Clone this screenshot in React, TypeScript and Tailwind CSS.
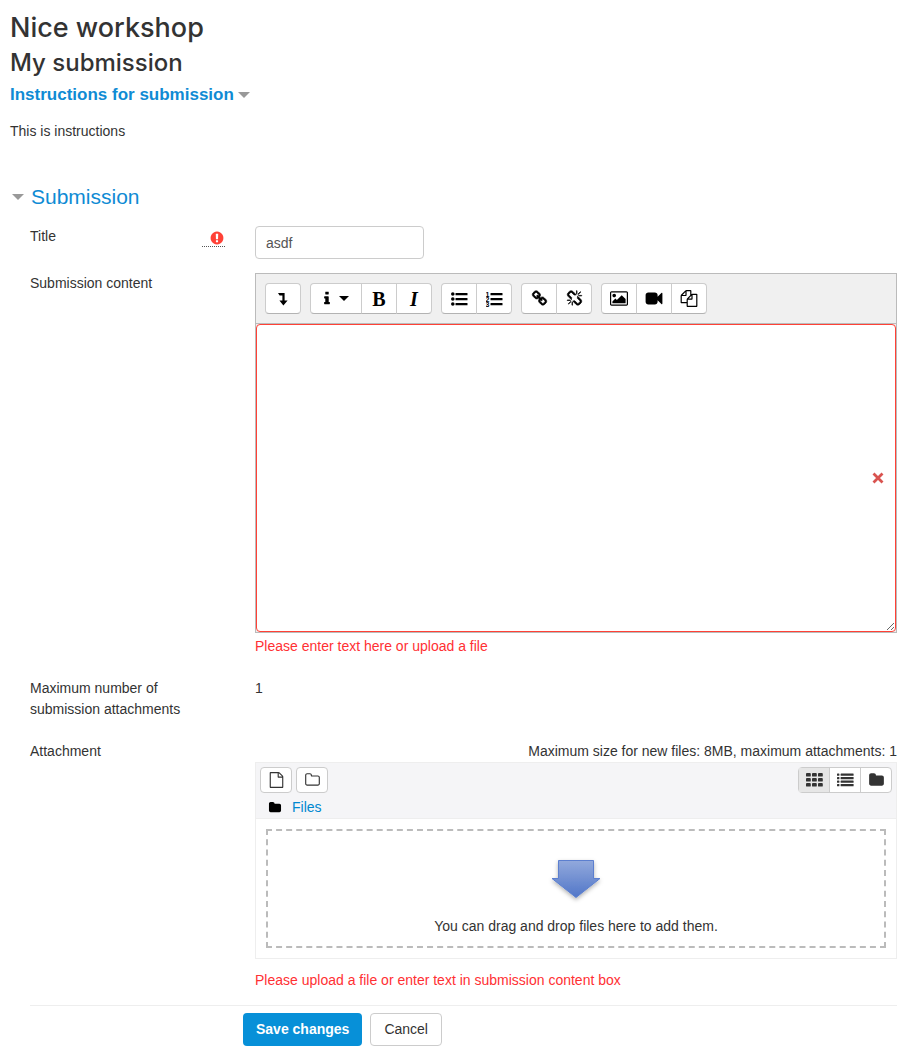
import type { ReactNode } from 'react';

const paths: Record<string, string> = {
  info: 'M1216 1344v128q0 26-19 45t-45 19h-512q-26 0-45-19t-19-45v-128q0-26 19-45t45-19h64v-384h-64q-26 0-45-19t-19-45v-128q0-26 19-45t45-19h384q26 0 45 19t19 45v576h64q26 0 45 19t19 45zm-128-1152v192q0 26-19 45t-45 19h-256q-26 0-45-19t-19-45v-192q0-26 19-45t45-19h256q26 0 45 19t19 45z',
  link: 'M1520 1216q0-40-28-68l-208-208q-28-28-68-28-42 0-72 32 3 3 19 18.5t21.5 21.5 15 19 13 25.5 3.5 27.5q0 40-28 68t-68 28q-15 0-27.5-3.5t-25.5-13-19-15-21.5-21.5-18.5-19q-33 31-33 73 0 40 28 68l206 207q27 27 68 27 40 0 68-26l147-146q28-28 28-67zm-703-705q0-40-28-68l-206-207q-28-28-68-28-39 0-68 27l-147 146q-28 28-28 67 0 40 28 68l208 208q27 27 68 27 42 0 72-31-3-3-19-18.5t-21.5-21.5-15-19-13-25.5-3.5-27.5q0-40 28-68t68-28q15 0 27.5 3.5t25.5 13 19 15 21.5 21.5 18.5 19q33-31 33-73zm895 705q0 120-85 203l-147 146q-83 83-203 83-121 0-204-85l-206-207q-83-83-83-203 0-123 88-209l-88-88q-86 88-208 88-120 0-204-84l-208-208q-84-84-84-204t85-203l147-146q83-83 203-83 121 0 204 85l206 207q83 83 83 203 0 123-88 209l88 88q86-88 208-88 120 0 204 84l208 208q84 84 84 204z',
  unlink:
    'M503 1271l-256 256q-10 9-23 9-12 0-23-9-9-10-9-23t9-23l256-256q10-9 23-9t23 9q9 10 9 23t-9 23zm169 41v320q0 14-9 23t-23 9-23-9-9-23v-320q0-14 9-23t23-9 23 9 9 23zm-224-224q0 14-9 23t-23 9h-320q-14 0-23-9t-9-23 9-23 23-9h320q14 0 23 9t9 23zm1264 128q0 120-85 203l-147 146q-83 83-203 83-121 0-204-85l-334-335q-21-21-42-56l239-18 273 274q28 28 68 27.5t68-27.5l147-146q28-28 28-67 0-40-28-68l-274-275 18-239q35 21 56 42l336 336q84 86 84 204zm-617-724l-239 18-273-274q-28-28-68-28-39 0-68 27l-147 146q-28 28-28 67 0 40 28 68l274 274-18 240q-35-21-56-42l-336-336q-84-86-84-204 0-120 85-203l147-146q83-83 203-83 121 0 204 85l334 335q21 21 42 56zm633 84q0 14-9 23t-23 9h-320q-14 0-23-9t-9-23 9-23 23-9h320q14 0 23 9t9 23zm-544-544v320q0 14-9 23t-23 9-23-9-9-23v-320q0-14 9-23t23-9 23 9 9 23zm407 151l-256 256q-11 9-23 9t-23-9q-9-10-9-23t9-23l256-256q10-9 23-9t23 9q9 10 9 23t-9 23z',
  image:
    'M576 576q0 80-56 136t-136 56-136-56-56-136 56-136 136-56 136 56 56 136zm1024 384v448h-1408v-192l320-320 160 160 512-512zm96-704h-1600q-13 0-22.5 9.5t-9.5 22.5v1216q0 13 9.5 22.5t22.5 9.5h1600q13 0 22.5-9.5t9.5-22.5v-1216q0-13-9.5-22.5t-22.5-9.5zm160 32v1216q0 66-47 113t-113 47h-1600q-66 0-113-47t-47-113v-1216q0-66 47-113t113-47h1600q66 0 113 47t47 113z',
  video:
    'M1792 352v1088q0 42-39 59-13 5-25 5-27 0-45-19l-403-403v166q0 119-84.5 203.5t-203.5 84.5h-704q-119 0-203.5-84.5t-84.5-203.5v-704q0-119 84.5-203.5t203.5-84.5h704q119 0 203.5 84.5t84.5 203.5v165l403-402q18-19 45-19 12 0 25 5 39 17 39 59z',
  files:
    'M1696 384q40 0 68 28t28 68v1216q0 40-28 68t-68 28h-960q-40 0-68-28t-28-68v-288h-544q-40 0-68-28t-28-68v-672q0-40 20-88t48-76l408-408q28-28 76-48t88-20h416q40 0 68 28t28 68v328q68-40 128-40h416zm-544 213l-299 299h299v-299zm-640-384l-299 299h299v-299zm196 647l316-316v-416h-384v416q0 40-28 68t-68 28h-416v640h512v-256q0-40 20-88t48-76zm956 804v-1152h-384v416q0 40-28 68t-68 28h-416v640h896z',
  file: 'M1596 380q28 28 48 76t20 88v1152q0 40-28 68t-68 28h-1344q-40 0-68-28t-28-68v-1600q0-40 28-68t68-28h896q40 0 88 20t76 48zm-444-244v376h376q-10-29-22-41l-313-313q-12-12-41-22zm384 1528v-1024h-416q-40 0-68-28t-28-68v-416h-768v1536h1280z',
  folder:
    'M1728 608v704q0 92-66 158t-158 66h-1216q-92 0-158-66t-66-158v-960q0-92 66-158t158-66h320q92 0 158 66t66 158v32h672q92 0 158 66t66 158z',
  folderOpen:
    'M1600 1312v-704q0-40-28-68t-68-28h-704q-40 0-68-28t-28-68v-64q0-40-28-68t-68-28h-320q-40 0-68 28t-28 68v960q0 40 28 68t68 28h1216q40 0 68-28t28-68zm128-704v704q0 92-66 158t-158 66h-1216q-92 0-158-66t-66-158v-960q0-92 66-158t158-66h320q92 0 158 66t66 158v32h672q92 0 158 66t66 158z',
  required:
    'M896 128q209 0 385.5 103t279.5 279.5 103 385.5-103 385.5-279.5 279.5-385.5 103-385.5-103-279.5-279.5-103-385.5 103-385.5 279.5-279.5 385.5-103zm128 1247v-190q0-14-9-23.5t-22-9.5h-192q-13 0-23 10t-10 23v190q0 13 10 23t23 10h192q13 0 22-9.5t9-23.5zm-2-344l18-621q0-12-10-18-10-8-24-8h-220q-14 0-24 8-10 6-10 18l17 621q0 10 10 17.5t24 7.5h185q14 0 23.5-7.5t10.5-17.5z',
};

function Icon({
  name,
  className = 'size-4',
  viewBox = '-64 0 1920 1792',
}: {
  name: string;
  className?: string;
  viewBox?: string;
}) {
  return (
    <svg viewBox={viewBox} className={className} fill="currentColor" aria-hidden="true">
      <path d={paths[name]} />
    </svg>
  );
}

function Caret({ className }: { className: string }) {
  return (
    <svg viewBox="0 0 12 6" className={className} fill="currentColor" aria-hidden="true">
      <path d="M0 0h12L6 6z" />
    </svg>
  );
}

function CrossIcon() {
  return (
    <svg
      viewBox="0 0 12 12"
      className="absolute top-1/2 right-3 size-3 -translate-y-1/2 text-[#d9534f]"
      fill="none"
      stroke="currentColor"
      strokeWidth="2.8"
      aria-hidden="true"
    >
      <path d="M1.500 1.500l9 9M10.500 1.500l-9 9" />
    </svg>
  );
}

function ArrowDownIcon() {
  return (
    <svg viewBox="0 0 10 14" className="h-[14px] w-[10px]" fill="currentColor" aria-hidden="true">
      <path d="M0 1h6.600v7.600H9.600L5.400 13.400 1.400 8.600h3V3.400H1.600z" />
    </svg>
  );
}

function BulletsIcon() {
  return (
    <svg viewBox="0 0 17 14" className="h-[14px] w-[17px]" fill="currentColor" aria-hidden="true">
      {[2, 7, 12].map((y) => (
        <g key={y}>
          <circle cx="1.8" cy={y} r="1.8" />
          <rect x="4.500" y={y - 1} width="12" height="2.2" rx="0.3" />
        </g>
      ))}
    </svg>
  );
}

function NumbersIcon() {
  return (
    <svg viewBox="0 0 17 16" className="h-4 w-[17px]" fill="currentColor" aria-hidden="true">
      {[3, 8, 13].map((y, i) => (
        <g key={y}>
          <text x="-0.500" y={y + 2.5} fontSize="7" fontWeight="700" fontFamily="Liberation Sans, sans-serif">
            {i + 1}
          </text>
          <rect x="4.500" y={y - 1} width="12" height="2.2" rx="0.3" />
        </g>
      ))}
    </svg>
  );
}

function GridIcon() {
  return (
    <svg viewBox="0 0 17 14" className="h-[14px] w-[17px]" fill="currentColor" aria-hidden="true">
      {[0, 5, 10].map((y) =>
        [0, 6, 12].map((x) => <rect key={`${x}-${y}`} x={x} y={y} width="4.8" height="3.6" rx="0.9" />),
      )}
    </svg>
  );
}

function ListIcon() {
  return (
    <svg viewBox="0 0 17 14" className="h-[14px] w-[17px]" fill="currentColor" aria-hidden="true">
      {[0.5, 4, 7.5, 11].map((y) => (
        <g key={y}>
          <rect x="0" y={y} width="2.4" height="2.2" rx="0.5" />
          <rect x="3.6" y={y} width="13" height="2.2" rx="0.5" />
        </g>
      ))}
    </svg>
  );
}

function DropArrow() {
  return (
    <svg viewBox="0 0 56 48" className="h-12 w-14" aria-hidden="true">
      <defs>
        <linearGradient id="drop" x1="0" y1="0" x2="0" y2="1">
          <stop offset="0" stopColor="#92a9dc" />
          <stop offset="1" stopColor="#5176c8" />
        </linearGradient>
        <filter id="shade" x="-20%" y="-20%" width="140%" height="150%">
          <feDropShadow dx="0" dy="2" stdDeviation="2" floodColor="#000" floodOpacity="0.3" />
        </filter>
      </defs>
      <path
        d="M10.500 3.500h35v18h6.500L28 40.500 4 21.500h6.500z"
        fill="url(#drop)"
        stroke="#5b7fcf"
        strokeWidth="1"
        filter="url(#shade)"
      />
    </svg>
  );
}

type Tool = { label: string; icon: ReactNode; wide?: boolean };

const toolGroups: Tool[][] = [
  [{ label: 'Show more buttons', icon: <ArrowDownIcon /> }],
  [
    {
      label: 'Paragraph styles',
      wide: true,
      icon: (
        <>
          <Icon name="info" viewBox="448 0 896 1792" className="h-[17px] w-2" />
          <Caret className="h-[5px] w-[10px]" />
        </>
      ),
    },
    { label: 'Bold', icon: <span className="font-['Liberation_Serif',serif] text-xl font-bold">B</span> },
    { label: 'Italic', icon: <span className="font-['Liberation_Serif',serif] text-xl font-bold italic">I</span> },
  ],
  [
    { label: 'Unordered list', icon: <BulletsIcon /> },
    { label: 'Ordered list', icon: <NumbersIcon /> },
  ],
  [
    { label: 'Link', icon: <Icon name="link" className="size-[17px] stroke-current stroke-[70]" /> },
    { label: 'Unlink', icon: <Icon name="unlink" className="size-[17px] stroke-current stroke-[70]" /> },
  ],
  [
    { label: 'Image', icon: <Icon name="image" className="h-[17px] w-[18px]" /> },
    { label: 'Media', icon: <Icon name="video" className="h-[17px] w-[18px]" /> },
    { label: 'Manage files', icon: <Icon name="files" className="h-[17px] w-[18px]" /> },
  ],
];

function Row({ label, htmlFor, extra, children }: { label: string; htmlFor?: string; extra?: ReactNode; children: ReactNode }) {
  return (
    <div className="flex">
      <div className="flex w-[225px] shrink-0 items-start justify-between pr-[30px]">
        {htmlFor ? (
          <label htmlFor={htmlFor}>{label}</label>
        ) : (
          <span className="max-w-40">{label}</span>
        )}
        {extra}
      </div>
      <div className="min-w-0 flex-1">{children}</div>
    </div>
  );
}

function Editor() {
  return (
    <div className="border border-[#bbb] bg-[#f0f0f0]">
      <div className="flex flex-wrap gap-[9px] border-b border-[#bbb] p-[9px] text-black">
        {toolGroups.map((group, i) => (
          <div key={i} className="flex pl-px">
            {group.map((tool) => (
              <button
                key={tool.label}
                type="button"
                aria-label={tool.label}
                className={
                  '-ml-px flex h-[31px] items-center justify-center gap-2 border border-[#ccc] border-b-[#b3b3b3] bg-white first:rounded-l last:rounded-r ' +
                  (tool.wide ? 'w-[52px]' : 'w-9')
                }
              >
                {tool.icon}
              </button>
            ))}
          </div>
        ))}
      </div>
      <div className="relative">
        <textarea
          id="content"
          className="block h-[308px] w-full resize-y rounded border border-[#ff4136] bg-white p-2 outline-none"
        />
        <CrossIcon />
      </div>
    </div>
  );
}

function FileManager() {
  const small = 'flex h-[26px] w-8 items-center justify-center rounded-sm border border-[#ccc] bg-white';
  return (
    <div className="border border-[#eee]">
      <div className="border-b border-[#eee] bg-[#f5f5f7] px-1 pt-1">
        <div className="flex justify-between">
          <div className="flex gap-1">
            <button type="button" aria-label="Add file" className={small}>
              <Icon name="file" className="h-4 w-[17px]" />
            </button>
            <button type="button" aria-label="Create folder" className={small}>
              <Icon name="folderOpen" className="h-4 w-[17px]" />
            </button>
          </div>
          <div className="flex divide-x divide-[#ccc] rounded-sm border border-[#ccc] bg-white">
            <button type="button" aria-label="Icons" className="flex h-6 w-[31px] items-center justify-center bg-[#e6e6e6]">
              <GridIcon />
            </button>
            <button type="button" aria-label="Details" className="flex h-6 w-[31px] items-center justify-center">
              <ListIcon />
            </button>
            <button type="button" aria-label="Tree" className="flex h-6 w-[30px] items-center justify-center">
              <Icon name="folder" className="h-4 w-[17px]" />
            </button>
          </div>
        </div>
        <div className="flex h-[25px] items-center gap-[10px] px-2 pt-1">
          <Icon name="folder" className="h-[13px] w-[14px] text-black" />
          <a href="#files" className="text-[#0088d0]">Files</a>
        </div>
      </div>
      <div className="p-[10px]">
        <div className="flex h-[119px] flex-col items-center border-2 border-dashed border-[#bbb] pt-[26px]">
          <DropArrow />
          <p className="mt-[11px]">You can drag and drop files here to add them.</p>
        </div>
      </div>
    </div>
  );
}

export default function App() {
  return (
    <main className="bg-white px-[10px] pt-2 pb-[6px] font-['Liberation_Sans',Arial,sans-serif] text-sm leading-[21px] text-[#333]">
      <h2 className="font-[Inter,sans-serif] text-[27px] leading-10 font-medium">Nice workshop</h2>
      <h3 className="font-[Inter,sans-serif] text-2xl leading-[30px] font-medium">My submission</h3>
      <h4 className="text-[17px] leading-[34px] font-bold text-[#0f8bd4]">
        <a href="#instructions" className="flex w-fit items-center gap-1">
          Instructions for submission
          <Caret className="h-[6px] w-3 text-[#999]" />
        </a>
      </h4>
      <p className="mt-[9px]">This is instructions</p>

      <form onSubmit={(e) => e.preventDefault()}>
        <h3 className="mt-[35px] text-[21px] leading-10 text-[#0f8bd4]">
          <a href="#submission" className="flex w-fit items-center gap-[7px] pl-[2px]">
            <Caret className="h-[6px] w-3 text-[#999]" />
            Submission
          </a>
        </h3>

        <div className="mt-[9px] pr-[2px] pl-5">
          <Row
            label="Title"
            htmlFor="title"
            extra={
              <span className="mt-1 flex w-[23px] justify-end border-b border-dotted border-[#555] text-[#ff4136]">
                <Icon name="required" className="size-4" />
              </span>
            }
          >
            <input
              id="title"
              type="text"
              defaultValue="asdf"
              className="block h-[33px] w-[169px] rounded border border-[#ccc] px-[10px] text-[#555]"
            />
          </Row>

          <div className="mt-[14px]">
            <Row label="Submission content" htmlFor="content">
              <Editor />
              <p className="mt-[3px] text-[#ff3033]">Please enter text here or upload a file</p>
            </Row>
          </div>

          <div className="mt-[21px]">
            <Row label="Maximum number of submission attachments">1</Row>
          </div>

          <div className="mt-[21px]">
            <Row label="Attachment">
              <p className="text-right">Maximum size for new files: 8MB, maximum attachments: 1</p>
              <FileManager />
              <p className="mt-[11px] text-[#ff3033]">Please upload a file or enter text in submission content box</p>
            </Row>
          </div>

          <div className="mt-[14px] flex gap-2 border-t border-[#eee] pt-[7px] pl-[213px]">
            <button type="submit" className="h-[33px] rounded-sm bg-[#0790d8] px-[13px] font-bold text-white">
              Save changes
            </button>
            <button type="button" className="h-[33px] rounded-sm border border-[#ccc] px-[13px]">
              Cancel
            </button>
          </div>
        </div>
      </form>
    </main>
  );
}
